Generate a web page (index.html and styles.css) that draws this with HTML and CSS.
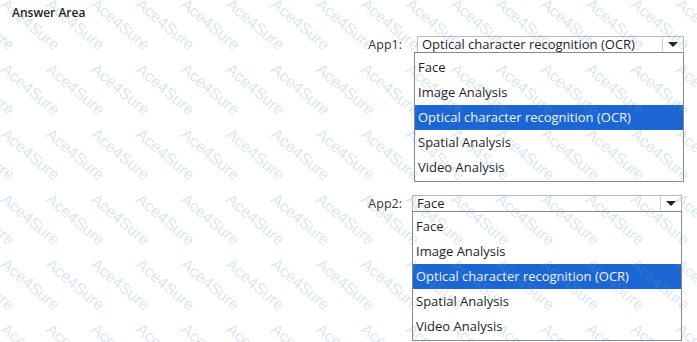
FILE: index.html
```html
<!DOCTYPE html>
<html>

<head>
    <link rel="stylesheet" href="styles.css">
</head>

<body>

    <div class="answer-area">
        <h3 class="title">Answer Area</h3>

        <div class="field app1">
            <span class="label">App1:</span>
            <div class="combo">
                <div class="select">
                    <span class="value">Optical character recognition (OCR)</span>
                    <span class="arrow"></span>
                </div>
                <ul class="options">
                    <li>Face</li>
                    <li>Image Analysis</li>
                    <li class="selected">Optical character recognition (OCR)</li>
                    <li>Spatial Analysis</li>
                    <li>Video Analysis</li>
                </ul>
            </div>
        </div>

        <div class="field app2">
            <span class="label">App2:</span>
            <div class="combo">
                <div class="select">
                    <span class="value">Face</span>
                    <span class="arrow"></span>
                </div>
                <ul class="options">
                    <li>Face</li>
                    <li>Image Analysis</li>
                    <li class="selected">Optical character recognition (OCR)</li>
                    <li>Spatial Analysis</li>
                    <li>Video Analysis</li>
                </ul>
            </div>
        </div>
    </div>

    <!-- watermark over the whole picture -->
    <svg class="watermark" width="697" height="342">
        <defs>
            <text id="wm" font-family="Liberation Sans, Arial, sans-serif" font-size="16" transform="rotate(40)">Ace4Sure</text>
            <pattern id="wmTile" width="45" height="65" patternUnits="userSpaceOnUse">
                <use href="#wm" transform="translate(0 6)" />
                <use href="#wm" transform="translate(-45 6)" />
                <use href="#wm" transform="translate(0 71)" />
                <use href="#wm" transform="translate(-45 71)" />
            </pattern>
        </defs>
        <rect width="697" height="342" fill="url(#wmTile)" />
    </svg>

</body>

</html>
```

FILE: styles.css
```css
body {
    margin: 0;
    font-family: "Open Sans", "Noto Sans", sans-serif;
    background-color: #fff;
    color: #1e1e1e;
    position: relative;
    width: 697px;
    height: 342px;
    overflow: hidden;
}

.answer-area {
    padding-top: 5px;
}

.title {
    margin: 0 0 15px 12px;
    font-size: 12px;
    line-height: 16px;
    font-weight: 600;
    color: #222;
}

.field {
    display: flex;
    align-items: flex-start;
    padding-left: 368px;
}

.app2 {
    margin-top: 13px;
}

.label {
    width: 34px;
    padding-right: 10px;
    padding-top: 1px;
    text-align: right;
    font-size: 12.5px;
    line-height: 16px;
    color: #333;
}

.combo {
    width: 270px;
}

.app1 .combo {
    margin-left: 2px;
}

.select {
    display: flex;
    height: 17px;
    margin-left: 3px;
    box-sizing: border-box;
    border: 1px solid #b9b9b9;
    background-color: #fff;
}

.app2 .select {
    margin-left: 0;
}

.select .value {
    flex: 1;
    padding-left: 4px;
    font-size: 13px;
    line-height: 15px;
    white-space: nowrap;
}

.select .arrow {
    width: 20px;
    border-left: 1px solid #cfcfcf;
    display: flex;
    align-items: center;
    justify-content: center;
}

.select .arrow::after {
    content: "";
    border-left: 5px solid transparent;
    border-right: 5px solid transparent;
    border-top: 5px solid #222;
}

.options {
    list-style: none;
    margin: -1px 0 0 0;
    padding: 2px 0 1px 0;
    border: 1px solid #8a8a8a;
    background-color: #fff;
}

.options li {
    height: 25px;
    line-height: 25px;
    padding-left: 3px;
    font-size: 13px;
    white-space: nowrap;
}

.options li.selected {
    background-color: #1b66d2;
    color: #eef4ff;
}

.watermark {
    position: absolute;
    left: 0;
    top: 0;
    pointer-events: none;
    fill: #6f9cc8;
    opacity: 0.25;
}
```
